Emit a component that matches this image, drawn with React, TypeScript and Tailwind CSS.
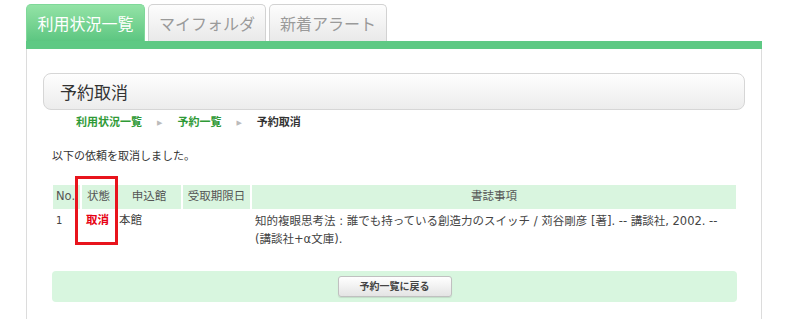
const jp = "font-['DejaVu_Sans','Noto_Sans_CJK_JP',sans-serif]";

function Tabs() {
  return (
    <div className="flex gap-[3px] pt-[4px] font-['Noto_Sans_CJK_JP',sans-serif]">
      <div className="w-[119px] h-[37px] rounded-t-[5px] bg-gradient-to-b from-[#93e3a6] to-[#5cc681] border border-[#7fd899] border-b-0 flex items-center justify-center text-white text-[16px]">
        利用状況一覧
      </div>
      <div className="w-[118px] h-[37px] rounded-t-[5px] bg-gradient-to-b from-[#fdfdfd] to-[#e9e9e9] border border-[#d2d2d2] border-b-0 flex items-center justify-center text-[#9a9a9a] text-[16px]">
        マイフォルダ
      </div>
      <div className="w-[118px] h-[37px] rounded-t-[5px] bg-gradient-to-b from-[#fdfdfd] to-[#e9e9e9] border border-[#d2d2d2] border-b-0 flex items-center justify-center text-[#9a9a9a] text-[16px]">
        新着アラート
      </div>
    </div>
  );
}

function Breadcrumb() {
  return (
    <div className="flex items-center h-[22px] pl-[33px] text-[11px] font-bold">
      <span className="text-[#2f9a36]">利用状況一覧</span>
      <span className="text-[#bbb] text-[7px] mx-[15px]">▶</span>
      <span className="text-[#2f9a36]">予約一覧</span>
      <span className="text-[#bbb] text-[7px] mx-[15px]">▶</span>
      <span className="text-[#333]">予約取消</span>
    </div>
  );
}

function ResultTable() {
  return (
    <div className="relative ml-[10px] mr-[9px]">
      <table className="w-full border-collapse text-[11.5px] text-[#444]">
        <thead>
          <tr className="bg-[#d9f5df] h-[24px] text-[#555]">
            <th className="w-[28px] font-normal text-left pl-[3px] border-r-2 border-white">No.</th>
            <th className="w-[35px] font-normal border-r-2 border-white">状態</th>
            <th className="w-[66px] font-normal border-r-2 border-white">申込館</th>
            <th className="w-[69px] font-normal border-r-2 border-white">受取期限日</th>
            <th className="font-normal">書誌事項</th>
          </tr>
        </thead>
        <tbody>
          <tr className="align-top">
            <td className="pl-[3px] pt-[4px] text-[10px]">1</td>
            <td className="pl-[5px] pt-[3px] text-[#e60012] font-bold">取消</td>
            <td className="pl-[3px] pt-[3px]">本館</td>
            <td></td>
            <td className="pl-[4px] pt-[3px] leading-[18px] pb-[4px]">
              知的複眼思考法 : 誰でも持っている創造力のスイッチ / 苅谷剛彦 [著]. -- 講談社, 2002. --
              <br />
              (講談社+α文庫).
            </td>
          </tr>
        </tbody>
      </table>
      <div className="absolute left-[22px] top-[-9px] w-[43px] h-[69px] border-[3px] border-[#e8141c]"></div>
    </div>
  );
}

export default function App() {
  return (
    <div className={`${jp} bg-white w-[800px] h-[319px] overflow-hidden`}>
      <div className="ml-[26px] w-[736px]">
        <Tabs />
        <div className="h-[8px] bg-[#5ec984]"></div>
        <div className="border-x border-[#dcdcdc] h-[270px] px-[16px] pt-[24px]">
          <div className="h-[37px] rounded-[8px] border border-[#d6d6d6] bg-gradient-to-b from-[#fefefe] to-[#ececec] flex items-center pl-[16px] text-[17px] text-[#333] font-['Noto_Sans_CJK_JP',sans-serif]">
            予約取消
          </div>
          <div className="mt-[2px]">
            <Breadcrumb />
          </div>
          <p className="mt-[15px] pl-[9px] text-[11px] text-[#333]">以下の依頼を取消しました。</p>
          <div className="mt-[19px]">
            <ResultTable />
          </div>
          <div className="mt-[19px] ml-[9px] mr-[8px] h-[31px] rounded-[4px] bg-[#d8f6df] flex items-center justify-center">
            <button className="w-[114px] h-[21px] rounded-[3px] border border-[#c0c0c0] bg-gradient-to-b from-white to-[#e4e4e4] text-[10px] font-bold text-[#444] shadow-[0_1px_1px_rgba(0,0,0,0.1)]">
              予約一覧に戻る
            </button>
          </div>
        </div>
      </div>
    </div>
  );
}
